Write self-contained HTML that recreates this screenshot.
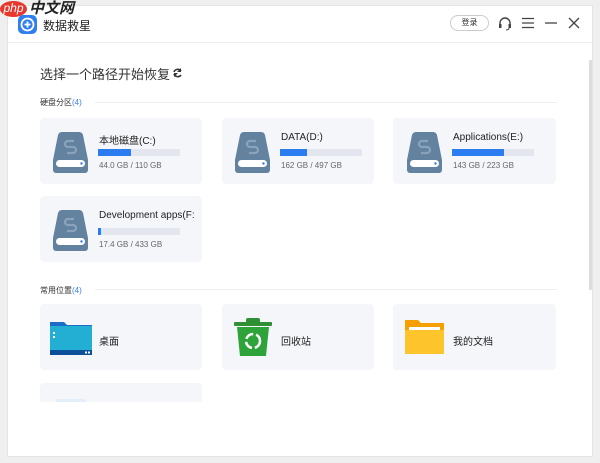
<!DOCTYPE html><html><head><meta charset="utf-8"><style>
*{margin:0;padding:0;box-sizing:border-box}
body{width:600px;height:463px;background:#efefef;font-family:"Liberation Sans","Noto Sans CJK SC",sans-serif;position:relative;overflow:hidden;color:#333}
.win{position:absolute;left:7px;top:5px;width:586px;height:452px;background:#fff;border:1px solid #e4e4e4}
.a{position:absolute}
.card{position:absolute;background:#f5f6fa;border-radius:4px}
.bar{position:absolute;height:7px;background:#e3e6ee}
.bar i{display:block;height:7px;background:#2b7cf0}
.t{position:absolute;font-size:10px;color:#222;white-space:nowrap}
.s{position:absolute;font-size:8px;color:#666;white-space:nowrap}
.sec{position:absolute;font-size:8px;color:#333}
.sec b{font-weight:normal;color:#3b7de8}
.line{position:absolute;height:1px;background:#eceef2}
</style></head><body>
<div class="win"></div>
<div class="a" style="left:0;top:1px;width:27px;height:16px;border-radius:50%;background:#e8372c;color:#fff;font:italic 12px 'Liberation Sans';text-align:center;line-height:15px">php</div>
<div class="a" style="left:29px;top:0;font:bold italic 15px 'Liberation Sans','Noto Sans CJK SC',sans-serif;color:#222;line-height:17px">中文网</div>
<div class="a" style="left:18px;top:15px;width:19px;height:19px;border-radius:5px;background:#2f7ff0"><svg width="19" height="19"><circle cx="9.5" cy="9.5" r="6" fill="none" stroke="#fff" stroke-width="1.8"/><path d="M9.5 6.5v6M6.5 9.5h6" stroke="#fff" stroke-width="1.8"/></svg></div>
<div class="a" style="left:43px;top:17px;font-size:12px;color:#222">数据救星</div>
<div class="a" style="left:450px;top:15px;width:39px;height:16px;border:1px solid #ccc;border-radius:8px;font-size:8px;text-align:center;line-height:14px;color:#333">登录</div>
<svg class="a" style="left:497px;top:15px" width="16" height="16"><path d="M3 11V8a5 5 0 0110 0v3" fill="none" stroke="#444" stroke-width="1.4"/><rect x="2" y="9" width="2.5" height="4" fill="#444"/><rect x="11.5" y="9" width="2.5" height="4" fill="#444"/><path d="M12 13q0 2-3 2" fill="none" stroke="#444"/></svg>
<svg class="a" style="left:521px;top:16px" width="14" height="14"><path d="M1 2.5h12M1 7h12M1 11.5h12" stroke="#444" stroke-width="1.3"/></svg>
<svg class="a" style="left:544px;top:16px" width="14" height="14"><path d="M1 7h12" stroke="#444" stroke-width="1.3"/></svg>
<svg class="a" style="left:567px;top:16px" width="14" height="14"><path d="M2 2l10 10M12 2L2 12" stroke="#444" stroke-width="1.3"/></svg>
<div class="line" style="left:8px;top:42px;width:584px;background:#eee"></div>
<div class="a" style="left:40px;top:64px;font-size:13px;color:#333">选择一个路径开始恢复</div>
<svg class="a" style="left:172px;top:67px" width="11" height="11"><path d="M9 4A4 4 0 002 5M2 7a4 4 0 007 1" fill="none" stroke="#333" stroke-width="1.6"/><path d="M9 1v4H5zM2 10V6h4z" fill="#333"/></svg>
<div class="sec" style="left:40px;top:97px">硬盘分区<b>(4)</b></div>
<div class="line" style="left:95px;top:102px;width:462px"></div>
<div class="sec" style="left:40px;top:285px">常用位置<b>(4)</b></div>
<div class="line" style="left:95px;top:289px;width:462px"></div>
<div class="a" style="left:589px;top:60px;width:3px;height:230px;background:#ddd"></div>

<div class="card" style="left:40px;top:118px;width:162px;height:66px"></div>
<div class="card" style="left:222px;top:118px;width:152px;height:66px"></div>
<div class="card" style="left:393px;top:118px;width:163px;height:66px"></div>
<div class="card" style="left:40px;top:196px;width:162px;height:66px"></div>
<svg width="0" height="0" style="position:absolute"><defs><g id="d"><path d="M9 0h17q3 0 4 3l5 25v10a3 3 0 01-3 3H3a3 3 0 01-3-3V28L5 3q1-3 4-3z" fill="#62829f"/><rect x="3" y="28" width="29" height="7" rx="3.5" fill="#fff"/><circle cx="28.5" cy="31.5" r="1.2" fill="#2b7cf0"/><path d="M21 9h-6a3 3 0 000 6h5a3 3 0 010 6h-6" fill="none" stroke="#8aa3bb" stroke-width="2.3"/></g></defs></svg>
<svg class="a" style="left:53px;top:132px" width="36" height="42"><use href="#d"/></svg>
<svg class="a" style="left:235px;top:132px" width="36" height="42"><use href="#d"/></svg>
<svg class="a" style="left:407px;top:132px" width="36" height="42"><use href="#d"/></svg>
<svg class="a" style="left:53px;top:210px" width="36" height="42"><use href="#d"/></svg>
<div class="t" style="left:99px;top:132px">本地磁盘(C:)</div>
<div class="bar" style="left:98px;top:149px;width:82px"><i style="width:33px"></i></div>
<div class="s" style="left:99px;top:161px">44.0 GB / 110 GB</div>
<div class="t" style="left:281px;top:132px">DATA(D:)</div>
<div class="bar" style="left:280px;top:149px;width:82px"><i style="width:27px"></i></div>
<div class="s" style="left:281px;top:161px">162 GB / 497 GB</div>
<div class="t" style="left:453px;top:132px">Applications(E:)</div>
<div class="bar" style="left:452px;top:149px;width:82px"><i style="width:52px"></i></div>
<div class="s" style="left:453px;top:161px">143 GB / 223 GB</div>
<div class="t" style="left:99px;top:210px;width:100px;overflow:hidden">Development apps(F:</div>
<div class="bar" style="left:98px;top:228px;width:82px"><i style="width:3px"></i></div>
<div class="s" style="left:99px;top:240px">17.4 GB / 433 GB</div>

<div class="card" style="left:40px;top:304px;width:162px;height:66px"></div>
<div class="card" style="left:222px;top:304px;width:152px;height:66px"></div>
<div class="card" style="left:393px;top:304px;width:163px;height:66px"></div>
<div class="card" style="left:40px;top:383px;width:162px;height:19px;border-radius:4px 4px 0 0"></div>
<div class="a" style="left:56px;top:399px;width:30px;height:3px;background:#e3eefa"></div>
<svg class="a" style="left:50px;top:320px" width="42" height="35"><path d="M0 2h14l3 3h25v30H0z" fill="#1a6cc8"/><rect x="0" y="6" width="42" height="29" fill="#23aed4"/><rect x="0" y="30" width="42" height="5" fill="#0d4f98"/><rect x="3" y="12" width="2" height="2" fill="#fff"/><rect x="3" y="16" width="2" height="2" fill="#fff"/><rect x="35" y="31.5" width="2" height="2" fill="#fff"/><rect x="38" y="31.5" width="2" height="2" fill="#fff"/></svg>
<div class="t" style="left:99px;top:333px">桌面</div>
<svg class="a" style="left:234px;top:318px" width="38" height="39"><rect x="12" y="0" width="14" height="5" rx="2" fill="#2e8f35"/><rect x="0" y="4" width="38" height="4" rx="1" fill="#2e8f35"/><path d="M3 9h32l-3 29H6z" fill="#2ea33a"/><circle cx="19" cy="23" r="7" fill="none" stroke="#fff" stroke-width="2.5" stroke-dasharray="9 3"/></svg>
<div class="t" style="left:281px;top:333px">回收站</div>
<svg class="a" style="left:405px;top:320px" width="39" height="34"><path d="M0 0h13l3 3h23v31H0z" fill="#f5a000"/><rect x="4" y="7" width="31" height="6" fill="#fff"/><rect x="0" y="10" width="39" height="24" fill="#fdc52b"/></svg>
<div class="t" style="left:453px;top:333px">我的文档</div>
</body></html>
